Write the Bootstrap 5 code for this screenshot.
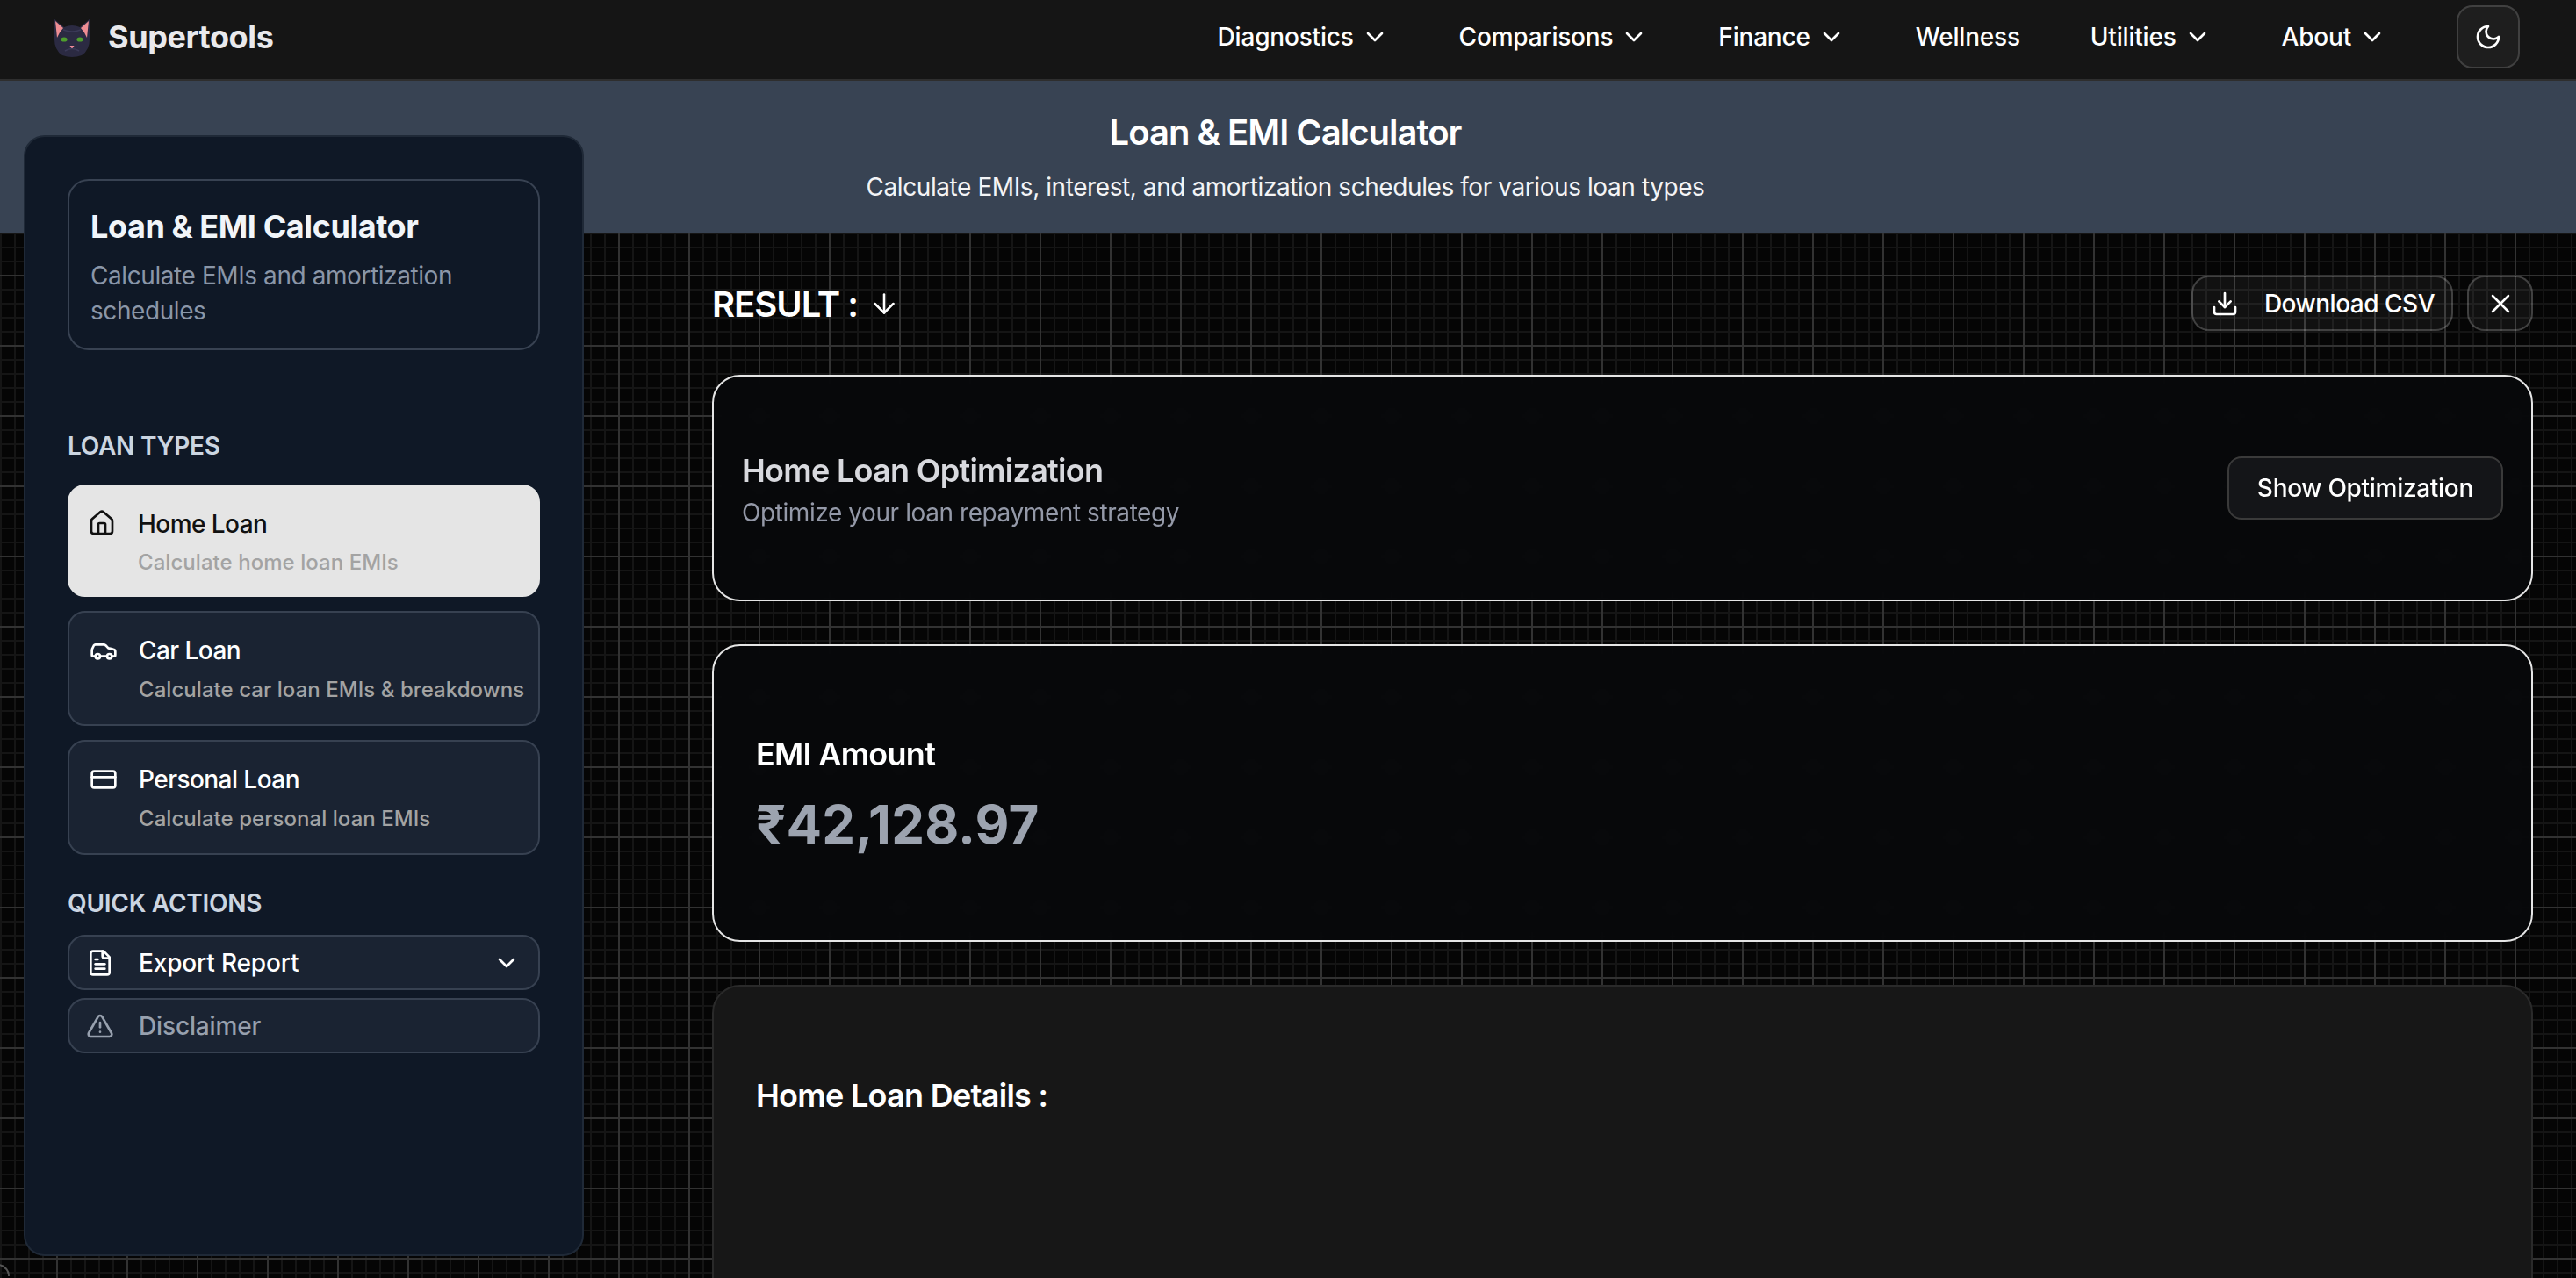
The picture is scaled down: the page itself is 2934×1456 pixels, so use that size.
<!DOCTYPE html>
<html lang="en">
<head>
    <meta charset="UTF-8">
    <title>Loan & EMI Calculator - Supertools</title>
    <link href="https://cdn.jsdelivr.net/npm/bootstrap@5.3.3/dist/css/bootstrap.min.css" rel="stylesheet">
    <style>
        html, body {
            height: 100%;
            overflow: hidden;
        }
        body {
            font-family: Inter, "Noto Sans", sans-serif;
            letter-spacing: -0.42px;
            color: #fff;
            background-color: #050505;
            background-image:
                linear-gradient(to right, #323232 2px, transparent 2px),
                linear-gradient(to bottom, #323232 2px, transparent 2px),
                linear-gradient(to right, #151515 2px, transparent 2px),
                linear-gradient(to bottom, #151515 2px, transparent 2px);
            background-size: 80px 80px, 80px 80px, 16px 16px, 16px 16px;
            background-position: 64px 73px, 64px 73px, 0 9px, 0 9px;
        }
        svg.ico {
            fill: none;
            stroke: currentColor;
            stroke-width: 2;
            stroke-linecap: round;
            stroke-linejoin: round;
            flex-shrink: 0;
        }
        svg.ico.thin {
            stroke-width: 1.7;
        }

        /* top bar */
        .top-nav {
            --bs-navbar-nav-link-padding-x: 0;
            height: 92px;
            padding: 0 64px 6px 60px;
            background: #151515;
            border-bottom: 2px solid #2e2e2e;
        }
        .top-nav .navbar-brand {
            display: flex;
            align-items: center;
            gap: 19px;
            padding: 0;
            margin: 0;
            font-size: 36px;
            font-weight: 700;
            letter-spacing: -0.4px;
            color: #e9e9ec;
        }
        .top-nav .navbar-nav {
            gap: 80px;
            margin-right: 80px;
        }
        .top-nav .nav-link {
            display: flex;
            align-items: center;
            gap: 8px;
            padding: 0;
            font-size: 28px;
            font-weight: 500;
            letter-spacing: -0.2px;
            color: #fff;
        }
        .theme-btn {
            width: 72px;
            height: 72px;
            padding: 0;
            display: flex;
            align-items: center;
            justify-content: center;
            background: #1e1e1e;
            border: 2px solid #404040;
            border-radius: 18px;
            color: #fff;
        }

        /* page header strip */
        .page-head {
            height: 174px;
            padding-top: 31px;
            background: #384353;
            text-align: center;
        }
        .page-head h1 {
            margin: 0 6px 0 0;
            font-size: 40px;
            line-height: 56px;
            font-weight: 600;
            letter-spacing: -1px;
        }
        .page-head p {
            margin: 14px 6px 0 0;
            font-size: 28px;
            line-height: 40px;
            color: #f3f4f6;
        }

        /* sidebar */
        .content {
            height: 1190px;
            padding: 0 49px 0 27px;
            gap: 146px;
        }
        .side {
            width: 638px;
            height: 1277px;
            margin-top: -112px;
            padding: 48px;
            flex-shrink: 0;
            position: relative;
            background: #0f1826;
            border: 2px solid #1f2937;
            border-radius: 24px;
        }
        .side-title {
            height: 195px;
            padding: 24px 24px;
            margin-bottom: 89px;
            border: 2px solid #384252;
            border-radius: 24px;
        }
        .side-title h2 {
            margin: 0 0 8px;
            font-size: 36px;
            line-height: 56px;
            font-weight: 700;
            letter-spacing: -0.43px;
            color: #f1f5f9;
        }
        .side-title p {
            margin: 0;
            font-size: 28px;
            line-height: 40px;
            color: #8a96a8;
        }
        .side-label {
            margin: 0 0 24px;
            font-size: 28px;
            line-height: 40px;
            font-weight: 600;
            letter-spacing: -0.25px;
            color: #cbd5e1;
            text-transform: uppercase;
        }
        .side-label.second {
            margin: 35px 0 16px;
        }
        .type-item {
            display: flex;
            align-items: flex-start;
            gap: 24px;
            width: 100%;
            height: 131px;
            padding: 27px 16px 0 23px;
            margin-bottom: 16px;
            text-align: left;
            color: #fff;
            background: #1a2332;
            border: 2px solid #374151;
            border-radius: 20px;
        }
        .type-item .name {
            display: block;
            margin-top: -4px;
            font-size: 28px;
            line-height: 40px;
            font-weight: 500;
            letter-spacing: -0.55px;
        }
        .type-item .desc {
            display: block;
            margin-top: 5px;
            font-size: 24px;
            line-height: 40px;
            font-weight: 500;
            letter-spacing: 0.05px;
            color: #a3a3a3;
            white-space: nowrap;
        }
        .type-item.active {
            height: 128px;
            padding: 26px 16px 0 21px;
            gap: 25px;
            color: #111;
            background: #e5e5e5;
            border-color: #e5e5e5;
        }
        .type-item.active .name {
            margin-top: -3px;
        }
        .type-item.active .desc {
            margin-top: 4px;
        }
        .action-item {
            display: flex;
            align-items: center;
            gap: 28px;
            width: 100%;
            height: 63px;
            padding: 0 20px 0 19px;
            margin-bottom: 9px;
            font-size: 28px;
            font-weight: 500;
            letter-spacing: -0.15px;
            color: #fff;
            background: #1a2332;
            border: 2px solid #374151;
            border-radius: 20px;
        }
        .action-item.muted-item {
            color: #97a0ae;
        }

        /* result column */
        .results {
            flex: 1;
            min-width: 0;
            overflow: hidden;
        }
        .result-bar {
            height: 63px;
            margin-top: 48px;
            margin-bottom: 50px;
        }
        .result-title {
            gap: 12px;
        }
        .result-bar h3 {
            margin: 0;
            padding-top: 3px;
            font-size: 40px;
            font-weight: 600;
            letter-spacing: -1px;
        }
        .ghost-btn {
            display: flex;
            align-items: center;
            height: 63px;
            padding: 0;
            font-size: 28px;
            font-weight: 500;
            letter-spacing: -0.5px;
            color: #fff;
            background: rgba(255, 255, 255, .05);
            border: 2px solid rgba(255, 255, 255, .2);
            border-radius: 20px;
        }
        .ghost-btn:hover {
            color: #fff;
        }
        .csv-btn {
            gap: 29px;
            padding: 0 19px 0 20px;
        }
        .close-btn {
            width: 75px;
            justify-content: center;
        }
        .panel {
            background: rgba(8, 9, 11, .93);
            border: 2px solid #e5e5e5;
            border-radius: 32px;
            color: #fff;
            backdrop-filter: blur(6px);
        }
        .panel h4 {
            margin: 0;
            font-size: 36px;
            line-height: 48px;
            font-weight: 600;
            letter-spacing: -0.72px;
        }
        .panel-opt {
            height: 258px;
            margin-bottom: 49px;
            padding: 0 32px;
        }
        .opt-text {
            padding-top: 4px;
        }
        .panel-opt h4 {
            color: #d8d9de;
        }
        .panel-opt p {
            margin: 4px 0 0;
            font-size: 28px;
            line-height: 40px;
            color: #9499a8;
        }
        .opt-btn {
            height: 72px;
            padding: 0 32px;
            font-size: 28px;
            font-weight: 500;
            letter-spacing: -0.3px;
            color: #fff;
            background: #141518;
            border: 2px solid #3a3a3a;
            border-radius: 16px;
        }
        .opt-btn:hover {
            color: #fff;
        }
        .panel-emi {
            height: 339px;
            margin-bottom: 49px;
            padding: 3px 48px 0;
        }
        .panel-emi h4 {
            margin-bottom: 20px;
        }
        .panel-emi .amount {
            font-size: 60px;
            line-height: 72px;
            font-weight: 700;
            letter-spacing: 0.2px;
            color: #9ca3af;
        }
        .panel-details {
            height: 400px;
            padding: 100px 48px 0;
            background: #171717;
            border-color: #2a2a2a;
        }

        /* rounded edge of a card peeking in at the bottom left corner */
        .edge-card {
            position: absolute;
            left: -100px;
            top: 1440px;
            width: 111px;
            height: 14px;
            border: 2px solid #555;
            border-bottom: 0;
            border-radius: 0 24px 0 0;
        }
    </style>
</head>
<body>
    <nav class="navbar navbar-expand top-nav">
        <a class="navbar-brand" href="#">
            <svg width="44" height="46" viewBox="0 0 44 46">
                <path d="M1 2 L13 12 Q22 8 31 12 L43 2 L42 22 Q43 38 33 44 Q22 48 11 44 Q1 38 2 22 Z" fill="#2b2a42"/>
                <path d="M3 5 L12 13 Q8 17 5 24 Z" fill="#ee8d93"/>
                <path d="M41 5 L32 13 Q36 17 39 24 Z" fill="#ee8d93"/>
                <ellipse cx="13" cy="26" rx="3.6" ry="2.6" fill="#4f9e2d"/>
                <ellipse cx="31" cy="26" rx="3.6" ry="2.6" fill="#4f9e2d"/>
                <path d="M19.5 33 h5 l-2.5 4 Z" fill="#ef8a9a"/>
                <path d="M14 39 Q22 34 30 39 M12 15 Q22 19 32 15" stroke="#3b3a58" stroke-width="1.5" fill="none"/>
            </svg>
            Supertools
        </a>
        <ul class="navbar-nav ms-auto">
            <li class="nav-item"><a class="nav-link" href="#">Diagnostics <svg class="ico" width="32" height="32" viewBox="0 0 24 24"><path d="m6 9 6 6 6-6"/></svg></a></li>
            <li class="nav-item"><a class="nav-link" href="#">Comparisons <svg class="ico" width="32" height="32" viewBox="0 0 24 24"><path d="m6 9 6 6 6-6"/></svg></a></li>
            <li class="nav-item"><a class="nav-link" href="#">Finance <svg class="ico" width="32" height="32" viewBox="0 0 24 24"><path d="m6 9 6 6 6-6"/></svg></a></li>
            <li class="nav-item"><a class="nav-link" href="#">Wellness</a></li>
            <li class="nav-item"><a class="nav-link" href="#">Utilities <svg class="ico" width="32" height="32" viewBox="0 0 24 24"><path d="m6 9 6 6 6-6"/></svg></a></li>
            <li class="nav-item"><a class="nav-link" href="#">About <svg class="ico" width="32" height="32" viewBox="0 0 24 24"><path d="m6 9 6 6 6-6"/></svg></a></li>
        </ul>
        <button class="btn theme-btn" type="button" aria-label="Toggle theme">
            <svg class="ico" width="32" height="32" viewBox="0 0 24 24"><path d="M12 3a6 6 0 0 0 9 9 9 9 0 1 1-9-9Z"/></svg>
        </button>
    </nav>

    <header class="page-head">
        <h1>Loan &amp; EMI Calculator</h1>
        <p>Calculate EMIs, interest, and amortization schedules for various loan types</p>
    </header>

    <div class="d-flex content">
        <aside class="side">
            <div class="side-title">
                <h2>Loan &amp; EMI Calculator</h2>
                <p>Calculate EMIs and amortization schedules</p>
            </div>

            <h5 class="side-label">Loan Types</h5>
            <button class="type-item active" type="button">
                <svg class="ico" width="32" height="32" viewBox="0 0 24 24"><path d="M15 21v-8a1 1 0 0 0-1-1h-4a1 1 0 0 0-1 1v8"/><path d="M3 10a2 2 0 0 1 .709-1.528l7-5.999a2 2 0 0 1 2.582 0l7 5.999A2 2 0 0 1 21 10v9a2 2 0 0 1-2 2H5a2 2 0 0 1-2-2z"/></svg>
                <span><span class="name">Home Loan</span><span class="desc">Calculate home loan EMIs</span></span>
            </button>
            <button class="type-item" type="button">
                <svg class="ico" width="32" height="32" viewBox="0 0 24 24"><path d="M19 17h2c.6 0 1-.4 1-1v-3c0-.9-.7-1.7-1.5-1.9C18.7 10.6 16 10 16 10s-1.3-1.4-2.2-2.3c-.5-.4-1.1-.7-1.8-.7H5c-.6 0-1.1.4-1.4.9l-1.4 2.9A3.7 3.7 0 0 0 2 12v4c0 .6.4 1 1 1h2"/><circle cx="7" cy="17" r="2"/><path d="M9 17h6"/><circle cx="17" cy="17" r="2"/></svg>
                <span><span class="name">Car Loan</span><span class="desc">Calculate car loan EMIs &amp; breakdowns</span></span>
            </button>
            <button class="type-item" type="button">
                <svg class="ico" width="32" height="32" viewBox="0 0 24 24"><rect width="20" height="14" x="2" y="5" rx="2"/><line x1="2" x2="22" y1="10" y2="10"/></svg>
                <span><span class="name">Personal Loan</span><span class="desc">Calculate personal loan EMIs</span></span>
            </button>

            <h5 class="side-label second">Quick Actions</h5>
            <button class="action-item" type="button">
                <svg class="ico" width="32" height="32" viewBox="0 0 24 24"><path d="M15 2H6a2 2 0 0 0-2 2v16a2 2 0 0 0 2 2h12a2 2 0 0 0 2-2V7Z"/><path d="M14 2v4a2 2 0 0 0 2 2h4"/><path d="M10 9H8"/><path d="M16 13H8"/><path d="M16 17H8"/></svg>
                Export Report
                <svg class="ico ms-auto" width="32" height="32" viewBox="0 0 24 24"><path d="m6 9 6 6 6-6"/></svg>
            </button>
            <button class="action-item muted-item" type="button">
                <svg class="ico" width="32" height="32" viewBox="0 0 24 24"><path d="m21.73 18-8-14a2 2 0 0 0-3.48 0l-8 14A2 2 0 0 0 4 21h16a2 2 0 0 0 1.73-3"/><path d="M12 9v4"/><path d="M12 17h.01"/></svg>
                Disclaimer
            </button>
        </aside>

        <main class="results">
            <div class="d-flex align-items-center justify-content-between result-bar">
                <div class="d-flex align-items-center result-title">
                    <h3>RESULT :</h3>
                    <svg class="ico thin" width="36" height="36" viewBox="0 0 24 24"><path d="M12 5v14"/><path d="m19 12-7 7-7-7"/></svg>
                </div>
                <div class="d-flex gap-3">
                    <button class="btn ghost-btn csv-btn" type="button">
                        <svg class="ico" width="32" height="32" viewBox="0 0 24 24"><path d="M21 15v4a2 2 0 0 1-2 2H5a2 2 0 0 1-2-2v-4"/><polyline points="7 10 12 15 17 10"/><line x1="12" x2="12" y1="15" y2="3"/></svg>
                        Download CSV
                    </button>
                    <button class="btn ghost-btn close-btn" type="button" aria-label="Close">
                        <svg class="ico thin" width="36" height="36" viewBox="0 0 24 24"><path d="M18 6 6 18"/><path d="m6 6 12 12"/></svg>
                    </button>
                </div>
            </div>

            <div class="card panel panel-opt d-flex flex-row align-items-center justify-content-between">
                <div class="opt-text">
                    <h4>Home Loan Optimization</h4>
                    <p>Optimize your loan repayment strategy</p>
                </div>
                <button class="btn opt-btn" type="button">Show Optimization</button>
            </div>

            <div class="card panel panel-emi justify-content-center">
                <h4>EMI Amount</h4>
                <div class="amount">₹42,128.97</div>
            </div>

            <div class="card panel panel-details">
                <h4>Home Loan Details :</h4>
            </div>
        </main>
    </div>

    <div class="edge-card"></div>

    <script src="https://cdn.jsdelivr.net/npm/bootstrap@5.3.3/dist/js/bootstrap.bundle.min.js"></script>
</body>
</html>
